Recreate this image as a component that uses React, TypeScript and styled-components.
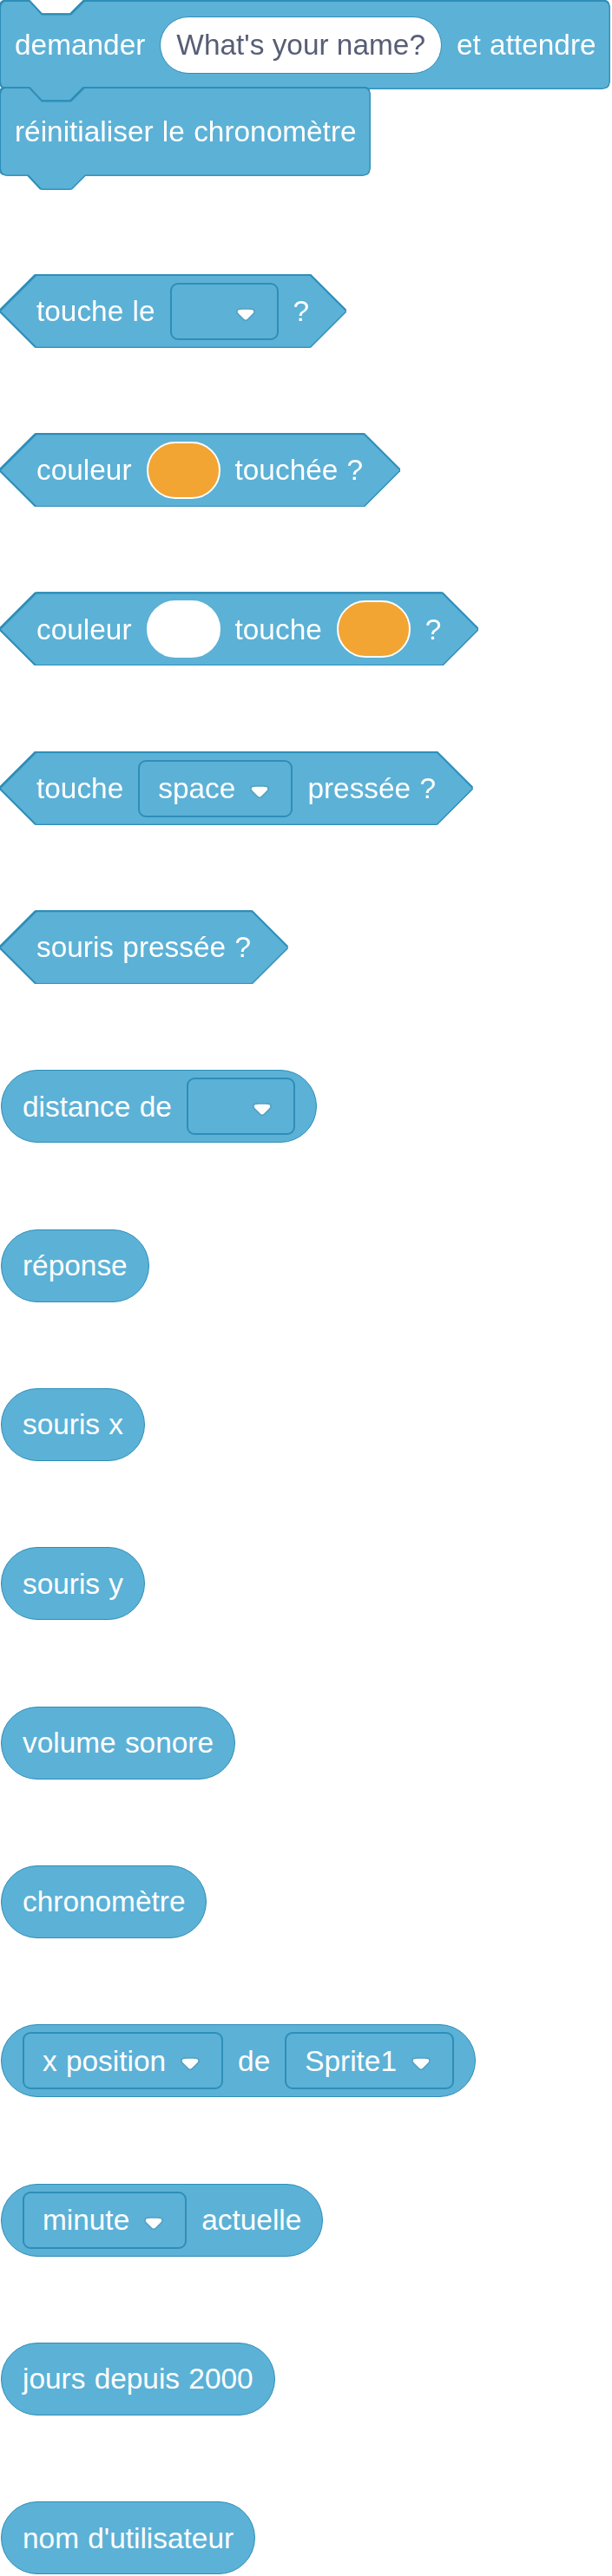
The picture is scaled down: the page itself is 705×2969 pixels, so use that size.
import React from "react";
import styled, { createGlobalStyle } from "styled-components";

const FILL = "#5cb1d6";
const STROKE = "#2e8eb8";

const GlobalStyle = createGlobalStyle`
  html, body { margin: 0; padding: 0; background: #ffffff; }
  body { font-family: "Liberation Sans", Arial, Helvetica, sans-serif; }
`;

const Palette = styled.main`
  display: flex;
  flex-direction: column;
  align-items: flex-start;
  gap: 99.33px;
  box-sizing: border-box;
  width: 705px;
  min-height: 2969px;
  padding: 1.5px 0 0 1px;
`;

const outline = `
  filter: drop-shadow(1.5px 0 0 ${STROKE}) drop-shadow(-1.5px 0 0 ${STROKE})
    drop-shadow(0 1.5px 0 ${STROKE}) drop-shadow(0 -1.5px 0 ${STROKE});
`;

/* ---------- stack blocks ---------- */

const StackGroup = styled.div`
  display: flex;
  flex-direction: column;
  align-items: flex-start;
`;

const StackOutline = styled.div`
  ${outline}
  & + & {
    margin-top: -16px;
  }
`;

const rightX = (v: number) => (v === 0 ? "100%" : `calc(100% - ${v}px)`);
const stackClip = [
  "0 7px", "0.94px 3.5px", "2.05px 2.05px", "3.5px 0.94px", "7px 0",
  "32px 0", "47px 16px", "81px 16px", "97px 0",
  `${rightX(7)} 0`, `${rightX(3.5)} 0.94px`, `${rightX(2.05)} 2.05px`, `${rightX(0.94)} 3.5px`, `${rightX(0)} 7px`,
  `${rightX(0)} 93px`, `${rightX(0.94)} 96.5px`, `${rightX(2.05)} 97.95px`, `${rightX(3.5)} 99.06px`, `${rightX(7)} 100px`,
  "97px 100px", "81px 116px", "47px 116px", "32px 100px",
  "7px 100px", "3.5px 99.06px", "2.05px 97.95px", "0.94px 96.5px", "0 93px",
].join(", ");

const StackBody = styled.div`
  display: flex;
  align-items: center;
  gap: 17px;
  box-sizing: border-box;
  height: 116px;
  padding: 0 15px 16px 16px;
  background: ${FILL};
  clip-path: polygon(${stackClip});
`;

/* ---------- boolean (hexagon) blocks ---------- */

const HexOutline = styled.div`
  ${outline}
  margin: 1px 0;
`;

const HexBody = styled.div`
  display: flex;
  align-items: center;
  gap: 17px;
  box-sizing: border-box;
  height: 82px;
  padding: 0 42px 0 41px;
  background: ${FILL};
  clip-path: polygon(0 50%, 41px 0, calc(100% - 41px) 0, 100% 50%, calc(100% - 41px) 100%, 41px 100%);
`;

/* ---------- reporter (round) blocks ---------- */

const Reporter = styled.div`
  display: flex;
  align-items: center;
  gap: 17px;
  box-sizing: border-box;
  height: 84px;
  padding: 0 24px;
  border: 1.5px solid ${STROKE};
  border-radius: 42px;
  background: ${FILL};
`;

/* ---------- parts ---------- */

const Label = styled.span`
  color: #ffffff;
  font-size: 33.4px;
  line-height: 1;
  white-space: nowrap;
  word-spacing: 1px;
`;

const TextField = styled.div`
  display: flex;
  align-items: center;
  box-sizing: border-box;
  height: 66px;
  padding: 0 18px;
  background: #ffffff;
  border: 1.5px solid ${STROKE};
  border-radius: 33px;
  color: #575e75;
  font-size: 33.4px;
  line-height: 1;
  white-space: nowrap;
`;

const Swatch = styled.div<{ $color: string }>`
  box-sizing: border-box;
  width: 85px;
  height: 66px;
  border-radius: 33px;
  background: ${(p) => p.$color};
  border: 2px solid #ffffff;
`;

const Dropdown = styled.div<{ $empty?: boolean }>`
  display: flex;
  align-items: center;
  justify-content: ${(p) => (p.$empty ? "flex-end" : "flex-start")};
  gap: 17px;
  box-sizing: border-box;
  height: 66px;
  min-width: ${(p) => (p.$empty ? "125px" : "0")};
  padding: 0 25px 0 21px;
  border: 2px solid ${STROKE};
  border-radius: 9px;
  background: ${FILL};
`;

const ArrowSvg = styled.svg`
  display: block;
  flex: none;
  width: 22px;
  height: 15.2px;
  margin-top: 7px;
`;

const Arrow = () => (
  <ArrowSvg viewBox="0 0 12.71 8.79">
    <path
      opacity={0.1}
      fill="#231f20"
      d="M12.71,2.44A2.41,2.41,0,0,1,12,4.16L8.08,8.08a2.45,2.45,0,0,1-3.450,0L0.72,4.16A2.42,2.42,0,0,1,0,2.44,2.48,2.48,0,0,1,.71.71C1,0.47,1.43,0,6.36,0S11.75,0.46,12,.71A2.44,2.44,0,0,1,12.71,2.44Z"
    />
    <path
      fill="#ffffff"
      d="M6.36,7.79a1.43,1.43,0,0,1-1-.42L1.42,3.45a1.44,1.44,0,0,1,0-2c0.56-.56,9.31-0.56,9.87,0a1.44,1.44,0,0,1,0,2L7.37,7.37A1.43,1.43,0,0,1,6.36,7.79Z"
    />
  </ArrowSvg>
);

const Menu = ({ text }: { text?: string }) => (
  <Dropdown $empty={!text}>
    {text && <Label>{text}</Label>}
    <Arrow />
  </Dropdown>
);

const Hex = ({ children }: { children: React.ReactNode }) => (
  <HexOutline>
    <HexBody>{children}</HexBody>
  </HexOutline>
);

const Stack = ({ children }: { children: React.ReactNode }) => (
  <StackOutline>
    <StackBody>{children}</StackBody>
  </StackOutline>
);

const ORANGE = "#f2a533";

export default function App() {
  return (
    <>
      <GlobalStyle />
      <Palette>
        <StackGroup>
          <Stack>
            <Label>demander</Label>
            <TextField>What's your name?</TextField>
            <Label>et attendre</Label>
          </Stack>
          <Stack>
            <Label>réinitialiser le chronomètre</Label>
          </Stack>
        </StackGroup>

        <Hex>
          <Label>touche le</Label>
          <Menu />
          <Label>?</Label>
        </Hex>
        <Hex>
          <Label>couleur</Label>
          <Swatch $color={ORANGE} />
          <Label>touchée ?</Label>
        </Hex>
        <Hex>
          <Label>couleur</Label>
          <Swatch $color="#ffffff" />
          <Label>touche</Label>
          <Swatch $color={ORANGE} />
          <Label>?</Label>
        </Hex>
        <Hex>
          <Label>touche</Label>
          <Menu text="space" />
          <Label>pressée ?</Label>
        </Hex>
        <Hex>
          <Label>souris pressée ?</Label>
        </Hex>

        <Reporter>
          <Label>distance de</Label>
          <Menu />
        </Reporter>
        <Reporter>
          <Label>réponse</Label>
        </Reporter>
        <Reporter>
          <Label>souris x</Label>
        </Reporter>
        <Reporter>
          <Label>souris y</Label>
        </Reporter>
        <Reporter>
          <Label>volume sonore</Label>
        </Reporter>
        <Reporter>
          <Label>chronomètre</Label>
        </Reporter>
        <Reporter>
          <Menu text="x position" />
          <Label>de</Label>
          <Menu text="Sprite1" />
        </Reporter>
        <Reporter>
          <Menu text="minute" />
          <Label>actuelle</Label>
        </Reporter>
        <Reporter>
          <Label>jours depuis 2000</Label>
        </Reporter>
        <Reporter>
          <Label>nom d'utilisateur</Label>
        </Reporter>
      </Palette>
    </>
  );
}
